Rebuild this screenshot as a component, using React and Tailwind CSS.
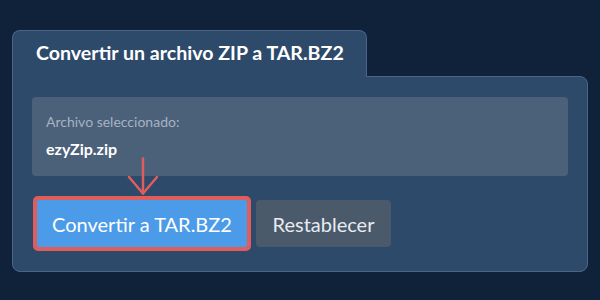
export default function App() {
  return (
    <div className="min-h-[300px] w-[600px] bg-[#10223a] px-3 pt-[30px] font-['Lato',_sans-serif]">
      <div className="relative z-10 -mb-px inline-flex h-[47px] w-[355px] items-center rounded-t-lg border border-b-0 border-[#4a6587] bg-[#2d4a6b] px-[23px] pb-[3px]">
        <h1 className="whitespace-nowrap text-[19.6px] font-bold text-white">Convertir un archivo ZIP a TAR.BZ2</h1>
      </div>
      <div className="relative rounded-b-lg rounded-tr-lg border border-[#4a6587] bg-[#2d4a6b] px-[19px] pt-5 pb-6">
        <div className="flex h-[79px] flex-col rounded bg-[#4b6079] px-[14px] pt-[16px]">
          <span className="text-[14px] leading-[18px] text-[#a7b3c1]">Archivo seleccionado:</span>
          <span className="mt-[8px] text-[16px] font-bold leading-[20px] text-white">ezyZip.zip</span>
        </div>
        <div className="mt-6 flex gap-[9px] pl-[5px]">
          <button className="h-[47px] w-[210px] rounded-[1px] bg-[#4b9be8] text-[20px] text-white outline-4 outline-[#e05d5d]">
            Convertir a TAR.BZ2
          </button>
          <button className="h-[47px] w-[135px] rounded bg-[#4a5a6b] text-[20px] text-[#e8ebef]">
            Restablecer
          </button>
        </div>
        <svg className="absolute left-[113.5px] top-[79px]" width="32" height="40" viewBox="0 0 32 40" fill="none" stroke="#e05d5d" strokeWidth="2.5" strokeLinecap="round" strokeLinejoin="round">
          <path d="M16 2.5V37.5" />
          <path d="M2 21L16 37.5L30 21" />
        </svg>
      </div>
    </div>
  );
}
